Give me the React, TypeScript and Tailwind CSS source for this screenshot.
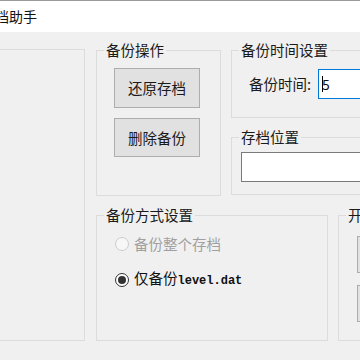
import React from "react";

const font = { fontFamily: '"Noto Sans CJK SC", "Noto Sans", sans-serif' };

function Group({ title, className, children }: { title: string; className: string; children?: React.ReactNode }) {
  return (
    <fieldset className={`border border-[#dcdcdc] ${className}`}>
      <legend className="ml-[7px] px-[2px] text-[14.5px] leading-[16px] text-[#1a1a1a]">{title}</legend>
      {children}
    </fieldset>
  );
}

function WinButton({ label, className = "" }: { label: string; className?: string }) {
  return (
    <button className={`flex items-center justify-center border border-[#adadad] bg-[#e1e1e1] text-[14.5px] text-[#1a1a1a] ${className}`}>
      {label}
    </button>
  );
}

export default function App() {
  return (
    <div className="w-[360px] h-[360px] overflow-hidden bg-[#f0f0f0] select-none" style={font}>
      {/* Title bar */}
      <div className="h-[32px] bg-white border-t border-[#9a9a9a] flex items-center">
        <span className="-ml-[19px] text-[14px] text-[#111]">存档助手</span>
      </div>

      <div className="flex pt-[10px] w-[600px]">
        {/* Left panel (cut off) */}
        <div className="w-[85px] h-[292px] mt-[7px] border border-l-0 border-[#dcdcdc]" />

        <div className="ml-[11px] flex flex-col gap-[11px]">
          {/* Top row */}
          <div className="flex gap-[10px]">
            <Group title="备份操作" className="w-[125px] h-[154px]">
              <div className="flex flex-col gap-[10px] pl-[17px] pt-[10px]">
                <WinButton label="还原存档" className="w-[86px] h-[40px]" />
                <WinButton label="删除备份" className="w-[86px] h-[39px]" />
              </div>
            </Group>

            <div className="flex flex-col gap-[11px]">
              <Group title="备份时间设置" className="w-[200px] h-[76px]">
                <div className="flex items-center pl-[17px] pt-[11px]">
                  <span className="text-[14.5px] text-[#1a1a1a] w-[69px]">备份时间:</span>
                  <div className="h-[30px] flex-1 border border-[#0078d7] bg-white flex items-center pl-[3px]">
                    <span className="w-px h-[16px] bg-black" />
                    <span className="text-[14px] text-[#111] -ml-[1px]">5</span>
                  </div>
                </div>
              </Group>
              <Group title="存档位置" className="w-[200px] h-[66px]">
                <div className="pl-[9px] pt-[7px]">
                  <div className="h-[30px] border border-[#7a7a7a] bg-white" />
                </div>
              </Group>
            </div>
          </div>

          {/* Bottom row */}
          <div className="flex gap-[10px]">
            <Group title="备份方式设置" className="w-[232px] h-[134px]">
              <div className="flex flex-col gap-[14px] pl-[18px] pt-[11px]">
                <label className="flex items-center gap-[5px] text-[14.5px] leading-[20px] text-[#a0a0a0]">
                  <span className="w-[14px] h-[14px] rounded-full border border-[#cccccc] bg-[#f7f7f7]" />
                  备份整个存档
                </label>
                <label className="flex items-center gap-[5px] text-[14.5px] leading-[20px] text-[#111]">
                  <span className="w-[14px] h-[14px] rounded-full border border-[#333] bg-white flex items-center justify-center">
                    <span className="w-[8px] h-[8px] rounded-full bg-[#333]" />
                  </span>
                  <span>
                    仅备份
                    <span className="text-[12px] font-bold" style={{ fontFamily: '"Liberation Mono", monospace' }}>
                      level.dat
                    </span>
                  </span>
                </label>
              </div>
            </Group>
            <Group title="开始备份" className="w-[120px] h-[134px]">
              <div className="flex flex-col gap-[12px] pl-[18px] pt-[13px]">
                <WinButton label="开始" className="w-[86px] h-[37px]" />
                <WinButton label="停止" className="w-[86px] h-[37px]" />
              </div>
            </Group>
          </div>
        </div>
      </div>
    </div>
  );
}
